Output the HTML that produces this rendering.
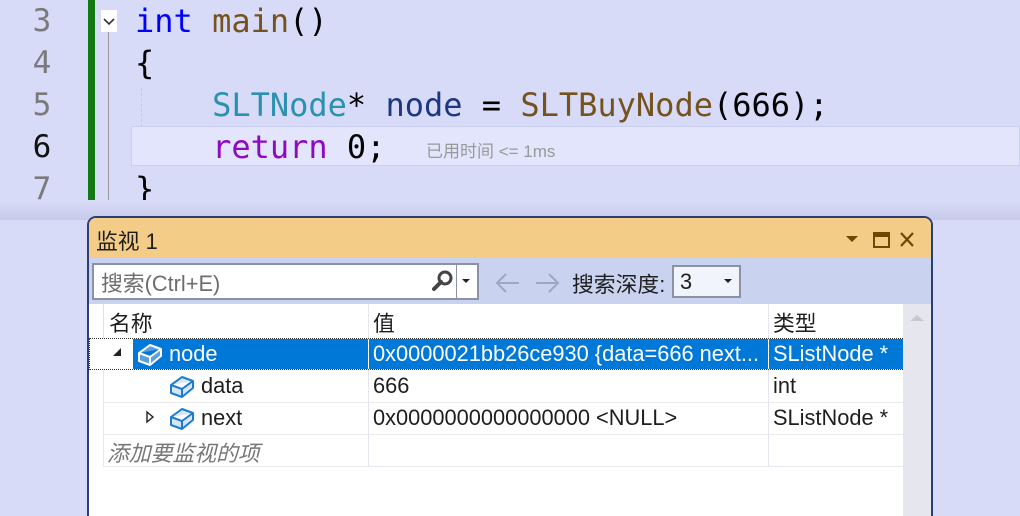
<!DOCTYPE html>
<html><head><meta charset="utf-8"><style>
*{margin:0;padding:0;box-sizing:border-box}
body{width:1020px;height:515px;overflow:hidden;background:#d8dbf8;position:relative;font-family:"Liberation Sans","Noto Sans CJK SC",sans-serif}
.code{position:absolute;font-family:"DejaVu Sans Mono","Liberation Mono",monospace;font-size:32px;line-height:42px;white-space:pre}
.ln{position:absolute;left:22px;width:40px;text-align:center;font-family:"DejaVu Sans Mono",monospace;font-size:31px;color:#7a7a7a;line-height:42px}
.a{position:absolute}
.ui{font-size:21.8px;color:#1e1e1e;position:absolute;white-space:nowrap}
</style></head><body>
<div class="ln" style="top:0">3</div>
<div class="ln" style="top:42px">4</div>
<div class="ln" style="top:84px">5</div>
<div class="ln" style="top:126px;color:#111">6</div>
<div class="ln" style="top:168px">7</div>
<div class="a" style="left:88px;top:0;width:7px;height:210px;background:#127a12"></div>
<div class="a" style="left:101px;top:10px;width:16px;height:22px;background:#fff"></div>
<svg class="a" style="left:101px;top:10px" width="16" height="22"><path d="M3 9 L8 14 L13 9" stroke="#333" stroke-width="1.6" fill="none"/></svg>
<div class="a" style="left:108px;top:32px;width:1px;height:177px;background:#999"></div>
<div class="a" style="left:108px;top:208px;width:9px;height:1px;background:#999"></div>
<div class="a" style="left:141px;top:88px;height:70px;border-left:1px dashed #c8c8d8"></div>
<div class="a" style="left:131px;top:126px;width:889px;height:40px;background:#e2e5fb;border:1px solid #ccd0f0"></div>
<div class="code" style="left:135px;top:0"><span style="color:#0000ff">int</span> <span style="color:#74531f">main</span>()</div>
<div class="code" style="left:135px;top:42px">{</div>
<div class="code" style="left:135px;top:84px">    <span style="color:#2b91af">SLTNode</span>* <span style="color:#1f377f">node</span> = <span style="color:#74531f">SLTBuyNode</span>(666);</div>
<div class="code" style="left:135px;top:126px">    <span style="color:#8f08c4">return</span> 0;</div>
<div class="code" style="left:135px;top:168px">}</div>
<div class="a" style="left:426px;top:137px;font-size:17px;color:#999">已用时间 &lt;= 1ms</div>
<div class="a" style="left:0;top:200px;width:1020px;height:20px;background:linear-gradient(#d8dbf8,#c7cae8)"></div>

<div class="a" style="left:87px;top:216px;width:846px;height:300px;border:2px solid #2c3e73;border-bottom:none;border-radius:9px 9px 0 0;background:#fff;overflow:hidden">
 <div class="a" style="left:0;top:0;width:842px;height:40px;background:#f3cc88"></div>
 <div class="ui" style="left:7px;top:7px">监视 1</div>
 <svg class="a" style="left:755px;top:12px" width="70" height="20"><path d="M2 6 L14 6 L8 12Z" fill="#6b4a00"/><rect x="30" y="3" width="15" height="14" fill="none" stroke="#6b4a00" stroke-width="2"/><rect x="30" y="3" width="15" height="4" fill="#6b4a00"/><path d="M57 3 L69 16 M69 3 L57 16" stroke="#6b4a00" stroke-width="2.2"/></svg>
 <div class="a" style="left:0;top:40px;width:842px;height:46px;background:#c9d3ef"></div>
 <div class="a" style="left:3px;top:45px;width:387px;height:37px;background:#fff;border:2px solid #8a93a6"></div>
 <div class="ui" style="left:12px;top:49px;color:#6d6d6d">搜索(Ctrl+E)</div>
 <svg class="a" style="left:340px;top:50px" width="28" height="28"><circle cx="16" cy="10" r="6" fill="none" stroke="#444" stroke-width="3"/><path d="M12 14 L5 21" stroke="#444" stroke-width="4" stroke-linecap="round"/></svg>
 <div class="a" style="left:367px;top:47px;width:1px;height:33px;background:#8a93a6"></div>
 <svg class="a" style="left:370px;top:58px" width="16" height="10"><path d="M3 3 L11 3 L7 7Z" fill="#222"/></svg>
 <svg class="a" style="left:405px;top:52px" width="70" height="26"><path d="M3 13 L25 13 M12 4 L3 13 L12 22" stroke="#a0a8c0" stroke-width="2" fill="none"/><path d="M42 13 L64 13 M55 4 L64 13 L55 22" stroke="#a0a8c0" stroke-width="2" fill="none"/></svg>
 <div class="ui" style="left:483px;top:50px">搜索深度:</div>
 <div class="a" style="left:583px;top:47px;width:69px;height:33px;background:#f2f4fc;border:2px solid #8a93a6"></div>
 <div class="ui" style="left:591px;top:51px">3</div>
 <svg class="a" style="left:632px;top:58px" width="16" height="10"><path d="M3 3 L11 3 L7 7Z" fill="#222"/></svg>
 <div class="a" style="left:814px;top:86px;width:28px;height:220px;background:#e6e6ee"></div>
 <svg class="a" style="left:818px;top:94px" width="20" height="12"><path d="M3 9 L10 3 L17 9Z" fill="#c8c8d0"/></svg>
 <div class="a" style="left:14px;top:86px;width:1px;height:34px;background:#dde"></div>
 <div class="a" style="left:279px;top:86px;width:1px;height:162px;background:#e4e6f0"></div>
 <div class="a" style="left:679px;top:86px;width:1px;height:162px;background:#e4e6f0"></div>
 <div class="ui" style="left:20px;top:89px">名称</div>
 <div class="ui" style="left:284px;top:89px">值</div>
 <div class="ui" style="left:684px;top:89px">类型</div>
 <div class="a" style="left:0;top:120px;width:814px;height:32px;border:1px dotted #333"></div>
 <div class="a" style="left:44px;top:121px;width:770px;height:30px;background:#0078d7"></div>
 <div class="a" style="left:279px;top:121px;width:1px;height:30px;background:#fff"></div>
 <div class="a" style="left:679px;top:121px;width:1px;height:30px;background:#fff"></div>
 <svg class="a" style="left:22px;top:128px" width="12" height="12"><path d="M10 2 L10 10 L2 10Z" fill="#222"/></svg>
 <svg class="a" style="left:47px;top:124px" width="28" height="26"><path d="M3 11 L14 3 L25 7 L25 14 L14 23 L3 19Z M3 11 L14 15 L25 7 M14 15 L14 23" fill="#5b9fe0" stroke="#fff" stroke-width="2" stroke-linejoin="round"/></svg>
 <div class="ui" style="left:80px;top:123px;color:#fff">node</div>
 <div class="ui" style="left:284px;top:123px;color:#fff">0x0000021bb26ce930 {data=666 next...</div>
 <div class="ui" style="left:684px;top:123px;color:#fff">SListNode *</div>
 <div class="a" style="left:14px;top:184px;width:800px;height:1px;background:#e8e8ee"></div>
 <div class="a" style="left:14px;top:216px;width:800px;height:1px;background:#e8e8ee"></div>
 <div class="a" style="left:14px;top:248px;width:800px;height:1px;background:#e8e8ee"></div>
 <div class="a" style="left:14px;top:152px;width:1px;height:96px;background:#e8e8ee"></div>
 <svg class="a" style="left:79px;top:156px" width="28" height="26"><path d="M3 11 L14 3 L25 7 L25 14 L14 23 L3 19Z M3 11 L14 15 L25 7 M14 15 L14 23" fill="#d6e6f8" stroke="#1c7cd0" stroke-width="2" stroke-linejoin="round"/></svg>
 <div class="ui" style="left:112px;top:155px">data</div>
 <div class="ui" style="left:284px;top:155px">666</div>
 <div class="ui" style="left:684px;top:155px">int</div>
 <svg class="a" style="left:55px;top:192px" width="12" height="14"><path d="M3 2 L9 7 L3 12Z" fill="#fff" stroke="#222" stroke-width="1.4"/></svg>
 <svg class="a" style="left:79px;top:188px" width="28" height="26"><path d="M3 11 L14 3 L25 7 L25 14 L14 23 L3 19Z M3 11 L14 15 L25 7 M14 15 L14 23" fill="#d6e6f8" stroke="#1c7cd0" stroke-width="2" stroke-linejoin="round"/></svg>
 <div class="ui" style="left:112px;top:187px">next</div>
 <div class="ui" style="left:284px;top:187px">0x0000000000000000 &lt;NULL&gt;</div>
 <div class="ui" style="left:684px;top:187px">SListNode *</div>
 <div class="ui" style="left:18px;top:219px;color:#777;font-style:italic">添加要监视的项</div>
</div>
</body></html>
